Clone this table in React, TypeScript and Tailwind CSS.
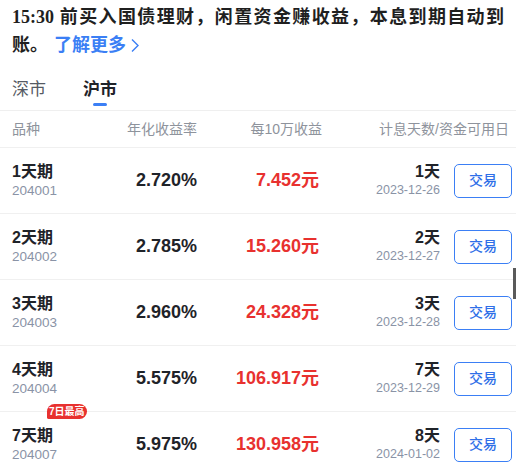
import React from "react";

const rows = [
  { name: "1天期", code: "204001", rate: "2.720%", profit: "7.452元", days: "1天", date: "2023-12-26" },
  { name: "2天期", code: "204002", rate: "2.785%", profit: "15.260元", days: "2天", date: "2023-12-27" },
  { name: "3天期", code: "204003", rate: "2.960%", profit: "24.328元", days: "3天", date: "2023-12-28" },
  { name: "4天期", code: "204004", rate: "5.575%", profit: "106.917元", days: "7天", date: "2023-12-29" },
  { name: "7天期", code: "204007", rate: "5.975%", profit: "130.958元", days: "8天", date: "2024-01-02", badge: "7日最高" },
];

export default function App() {
  const [tab, setTab] = React.useState(1);

  return (
    <div className="relative w-[516px] h-[467px] overflow-hidden bg-white font-['Liberation_Sans','Noto_Sans_CJK_SC',sans-serif] text-[#1f2329]">
      {/* intro */}
      <p className="px-3 pt-[3px] text-[18px] leading-[28px] font-bold text-justify font-['Liberation_Serif','Noto_Sans_CJK_SC',serif] text-[#1f1f1f]">
        15:30 前买入国债理财，闲置资金赚收益，本息到期自动到账。
        <span className="ml-[6px] inline-flex items-center text-[#3b7ff5] font-['Liberation_Sans','Noto_Sans_CJK_SC',sans-serif]">
          了解更多
          <svg width="11" height="15" viewBox="0 0 11 15" className="ml-[3px]">
            <path d="M3 1.5 L9 7.5 L3 13.5" fill="none" stroke="#3b7ff5" strokeWidth="1.4" />
          </svg>
        </span>
      </p>

      {/* tabs */}
      <div className="flex gap-[37px] px-3 h-[52px] border-b border-[#efefef]">
        {["深市", "沪市"].map((t, i) => (
          <button key={t} onClick={() => setTab(i)} className="flex flex-col items-center pt-[19px]">
            <span className={`text-[17px] leading-[24px] ${tab === i ? "font-bold text-[#1f2329]" : "text-[#555a63]"}`}>{t}</span>
            <span className={`mt-[1px] h-[3px] w-[14px] rounded-full ${tab === i ? "bg-[#3b7ff5]" : "bg-transparent"}`} />
          </button>
        ))}
      </div>

      {/* header */}
      <div className="flex items-center h-[37px] pl-3 text-[14px] text-[#8e939c] border-b border-[#f0f0f0]">
        <div className="w-[110px]">品种</div>
        <div className="w-[75px] text-right">年化收益率</div>
        <div className="w-[125px] text-right">每10万收益</div>
        <div className="w-[187px] text-right">计息天数/资金可用日</div>
      </div>

      {/* rows */}
      {rows.map((r) => (
        <div key={r.code} className="flex items-center h-[66px] pl-3 border-b border-[#f0f0f0]">
          <div className="relative w-[110px] flex flex-col">
            <span className="text-[16px] leading-[19px] font-semibold text-[#1f2329]">{r.name}</span>
            <span className="text-[13.5px] leading-[19px] text-[#8a93a6]">{r.code}</span>
            {r.badge && (
              <span className="absolute left-[35px] top-[-22px] h-[15px] px-[2px] rounded-[8px] rounded-bl-[2px] bg-[#e8312f] text-white text-[10px] leading-[15px] font-bold">
                {r.badge}
              </span>
            )}
          </div>
          <div className="w-[75px] text-right text-[18px] font-bold text-[#1f2329]">{r.rate}</div>
          <div className="w-[122px] text-right text-[18px] font-bold text-[#e8312f]">{r.profit}</div>
          <div className="w-[121px] flex flex-col items-end">
            <span className="text-[16px] leading-[19px] font-semibold text-[#1f2329]">{r.days}</span>
            <span className="text-[12.5px] leading-[19px] text-[#8a93a6]">{r.date}</span>
          </div>
          <button className="ml-[14px] w-[58px] h-[34px] rounded-[5px] border border-[#3b7ff5] text-[14px] font-medium text-[#2f6fe8]">
            交易
          </button>
        </div>
      ))}

      {/* scrollbar thumb */}
      <div className="absolute right-0 top-[268px] w-[3px] h-[31px] bg-[#5a5a5a]" />
    </div>
  );
}
